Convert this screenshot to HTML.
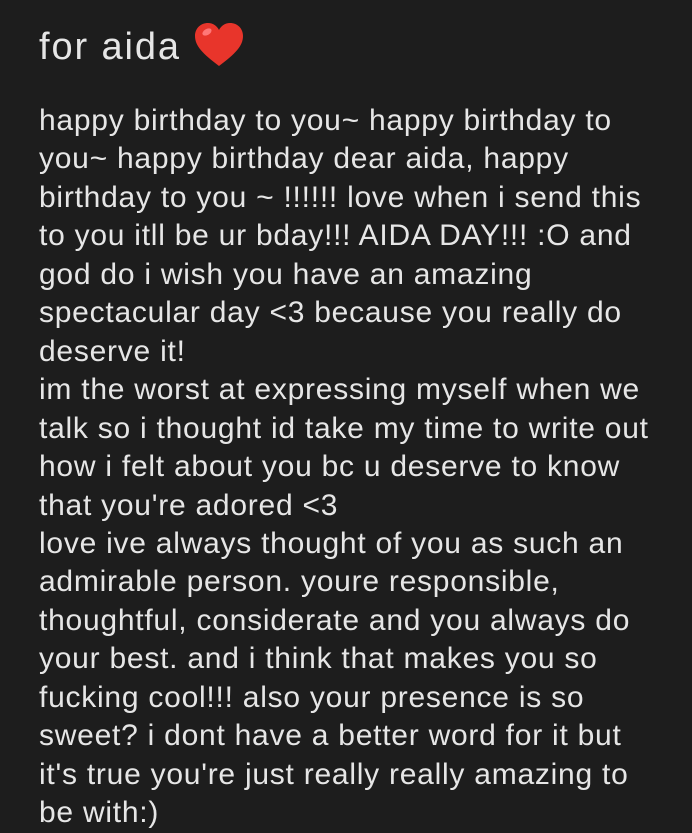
<!DOCTYPE html>
<html><head><meta charset="utf-8"><style>
html,body{margin:0;padding:0;background:#1d1d1d;width:692px;height:832px;overflow:hidden}
body{font-family:"Liberation Sans","DejaVu Sans",sans-serif;color:#e6e6e6}
.t{position:absolute;left:39px;top:25px;font-size:38px;line-height:44px;letter-spacing:1.9px;white-space:nowrap}
.h{position:absolute;left:193px;top:22px}
.b{position:absolute;left:39px;top:102px;font-size:30px;line-height:38.45px;letter-spacing:0.75px;white-space:nowrap}
</style></head><body>
<div class="t">for aida</div>
<svg class="h" width="52" height="46" viewBox="0 0 52 46"><path d="M26 44 C10 32 2 24 2 14 C2 6 8 1 15 1 C20 1 24 4 26 8 C28 4 32 1 37 1 C44 1 50 6 50 14 C50 24 42 32 26 44Z" fill="#e8352b"/><ellipse cx="14" cy="10" rx="5" ry="3" fill="#f77" transform="rotate(-30 14 10)"/></svg>
<div class="b">
<div>happy birthday to you~ happy birthday to</div>
<div>you~ happy birthday dear aida, happy</div>
<div>birthday to you ~ !!!!!! love when i send this</div>
<div>to you itll be ur bday!!! AIDA DAY!!! :O and</div>
<div>god do i wish you have an amazing</div>
<div>spectacular day &lt;3 because you really do</div>
<div>deserve it!</div>
<div>im the worst at expressing myself when we</div>
<div>talk so i thought id take my time to write out</div>
<div>how i felt about you bc u deserve to know</div>
<div>that you're adored &lt;3</div>
<div>love ive always thought of you as such an</div>
<div>admirable person. youre responsible,</div>
<div>thoughtful, considerate and you always do</div>
<div>your best. and i think that makes you so</div>
<div>fucking cool!!! also your presence is so</div>
<div>sweet? i dont have a better word for it but</div>
<div>it's true you're just really really amazing to</div>
<div>be with:)</div>
</div>
</body></html>
